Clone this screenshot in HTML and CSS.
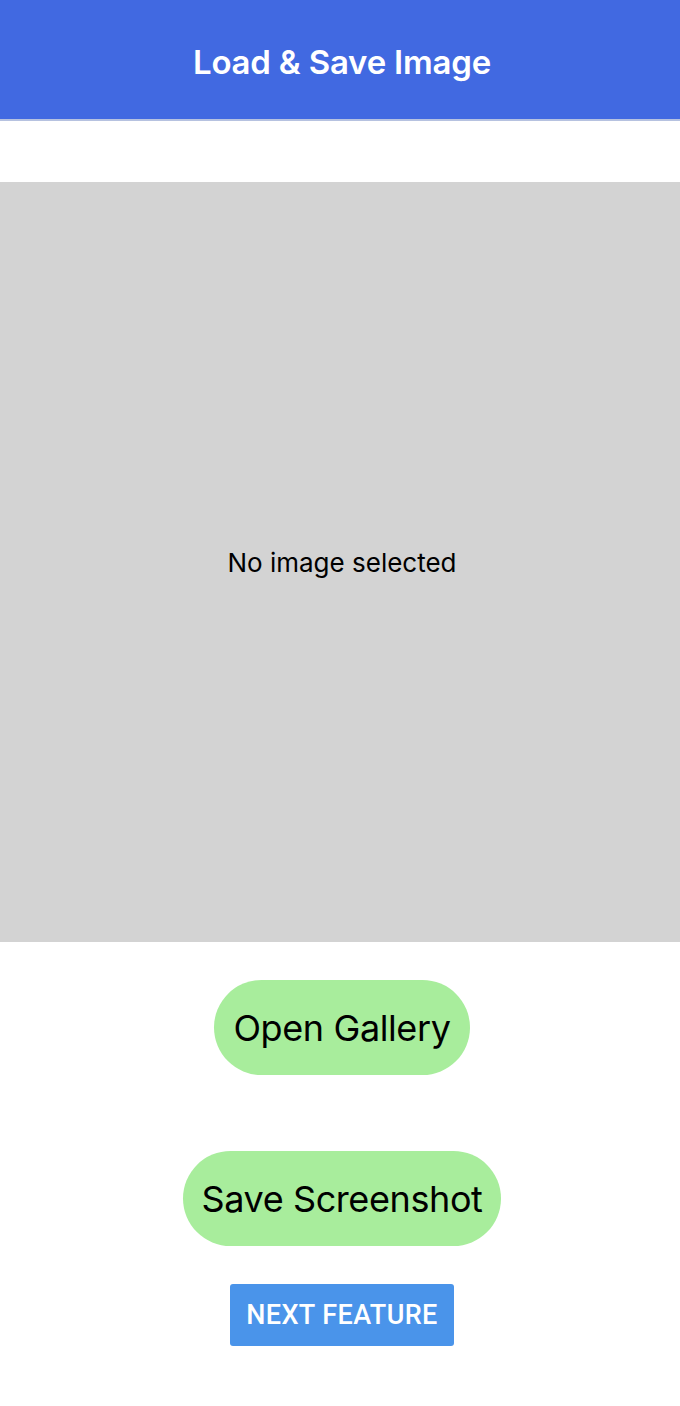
FILE: index.html
```html
<!DOCTYPE html>
<html>
<head>
<meta charset="utf-8">
<link rel="stylesheet" href="styles.css">
</head>
<body>
<header class="header"><h1 class="title">Load &amp; Save Image</h1></header>
<main class="content">
  <div class="preview"><span class="placeholder">No image selected</span></div>
  <div class="actions">
    <button class="pill">Open Gallery</button>
    <button class="pill">Save Screenshot</button>
    <button class="next">NEXT FEATURE</button>
  </div>
</main>
</body>
</html>
```
FILE: styles.css
```css
html, body { margin: 0; padding: 0; background: #fff; }
body { font-family: Inter, "Noto Sans", sans-serif; width: 680px; }
.header {
  height: 119px;
  background: #4169e1;
  border-bottom: 2px solid #b6c2e0;
  display: flex; align-items: center; justify-content: center;
  padding-left: 4px;
}
.title { margin: 0; padding-top: 4px; color: #fff; font-size: 33px; font-weight: 600; letter-spacing: -0.2px; }
.content { padding-top: 61px; display: flex; flex-direction: column; }
.preview {
  height: 760px; background: #d3d3d3;
  display: flex; align-items: center; justify-content: center;
  padding-left: 4px;
}
.placeholder { font-size: 26px; color: #000; }
.actions { display: flex; flex-direction: column; align-items: center; padding-top: 38px; padding-left: 4px; }
.pill {
  font-family: inherit; border: none; background: #a8ed9c; color: #000;
  height: 95px; border-radius: 48px; padding: 0 19px; font-size: 36px;
  letter-spacing: -0.4px;
}
.pill + .pill { margin-top: 76px; }
.next {
  margin-top: 38px; font-family: Roboto, sans-serif; font-weight: 500;
  background: #4a94ea; color: #fff; border: none; border-radius: 3px;
  height: 62px; padding: 0 16px; font-size: 27px; letter-spacing: 0.4px;
}
```
